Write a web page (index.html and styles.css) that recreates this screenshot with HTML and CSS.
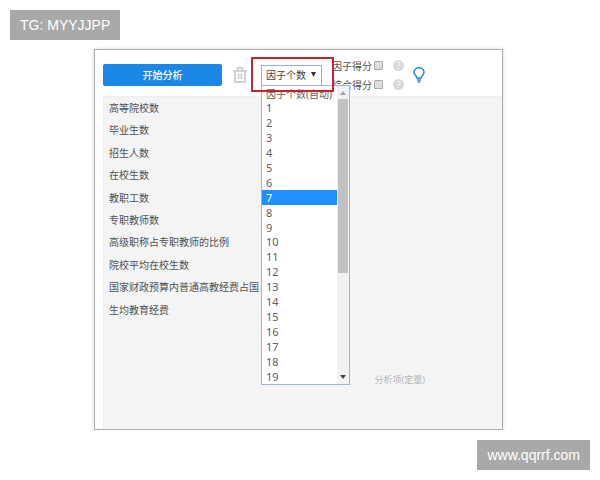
FILE: index.html
```html
<!DOCTYPE html>
<html lang="zh-CN">
<head>
<meta charset="utf-8">
<title>因子分析</title>
<link rel="stylesheet" href="styles.css">
</head>
<body>
<div class="badge badge-top">TG: MYYJJPP</div>
<main class="window">
  <header class="toolbar">
    <button class="start" type="button">开始分析</button>
    <button class="icon-button trash" type="button" aria-label="删除">
      <svg viewBox="0 0 14 16" width="14" height="16" fill="none" stroke="#d2d2d2" stroke-width="2"><path d="M0 4h14M4.500 3V1h5v2M2 4v11h10V4M5.500 7v5M8.500 7v5"/></svg>
    </button>
    <div class="picker">
      <select class="factor" aria-label="因子个数"><option>因子个数</option></select>
      <svg class="arrow" viewBox="0 0 5 5" width="5" height="5"><path d="M0 0h5L2.500 5z" fill="#333"/></svg>
      <div class="popup">
        <ul class="options" role="listbox" aria-label="因子个数">
          <li role="option">因子个数(自动)</li>
          <li role="option">1</li>
          <li role="option">2</li>
          <li role="option">3</li>
          <li role="option">4</li>
          <li role="option">5</li>
          <li role="option">6</li>
          <li role="option" class="active" aria-selected="true">7</li>
          <li role="option">8</li>
          <li role="option">9</li>
          <li role="option">10</li>
          <li role="option">11</li>
          <li role="option">12</li>
          <li role="option">13</li>
          <li role="option">14</li>
          <li role="option">15</li>
          <li role="option">16</li>
          <li role="option">17</li>
          <li role="option">18</li>
          <li role="option">19</li>
        </ul>
        <div class="scrollbar">
          <svg viewBox="0 0 6 4" width="6" height="4"><path d="M0 4h6L3 0z" fill="#a5a5a5"/></svg>
          <div class="track"><div class="thumb"></div></div>
          <svg viewBox="0 0 6 4" width="6" height="4"><path d="M0 0h6L3 4z" fill="#444"/></svg>
        </div>
      </div>
      <div class="highlight"></div>
    </div>
    <div class="checks">
      <div class="check"><label for="factor-score">因子得分</label><input id="factor-score" type="checkbox"><span class="help">?</span></div>
      <div class="check"><label for="total-score">综合得分</label><input id="total-score" type="checkbox"><span class="help">?</span></div>
    </div>
    <button class="icon-button" type="button" aria-label="提示">
      <svg viewBox="0 0 12 16" width="12" height="16" fill="none" stroke="#2589d2" stroke-width="1.5"><path d="M4 11C4 9 1 8.300 1 5.300a5 4.600 0 0 1 10 0C11 8.300 8 9 8 11zM4 13h4M4.800 15h2.400"/></svg>
    </button>
  </header>
  <section class="panel">
    <ul class="variables">
      <li>高等院校数</li>
      <li>毕业生数</li>
      <li>招生人数</li>
      <li>在校生数</li>
      <li>教职工数</li>
      <li>专职教师数</li>
      <li>高级职称占专职教师的比例</li>
      <li>院校平均在校生数</li>
      <li>国家财政预算内普通高教经费占国</li>
      <li>生均教育经费</li>
    </ul>
    <p class="drop-label">分析项(定量)</p>
  </section>
</main>
<div class="badge badge-bottom">www.qqrrf.com</div>
</body>
</html>
```
FILE: styles.css
```css
* { box-sizing: border-box; }
body {
  margin: 0;
  padding: 49px 97px 0 94px;
  background: #fff;
  color: #505050;
  font: 10px/14px "Noto Sans", "Noto Sans CJK SC", sans-serif;
}
ul, p { margin: 0; padding: 0; list-style: none; }
button, select, input { margin: 0; font: inherit; }

.badge {
  position: absolute;
  height: 30px;
  padding: 0 10px;
  background: #a9a9a9;
  color: #fff;
  font: 14px/30px "Liberation Sans", sans-serif;
}
.badge-top { left: 10px; top: 10px; }
.badge-bottom { right: 10px; bottom: 10px; }

.window {
  padding-left: 8px;
  border: 1px solid #adadad;
  box-shadow: 0 0 4px #d8d8d8;
}
.toolbar {
  display: flex;
  align-items: center;
  height: 46px;
  padding-top: 4px;
}
.start {
  width: 119px;
  height: 22px;
  padding: 0;
  border: 0;
  border-radius: 2px;
  background: #1b87e6;
  color: #fff;
  font-weight: 500;
}
.icon-button {
  display: flex;
  padding: 0;
  border: 0;
  background: none;
}
.trash { margin: 0 14px 0 11px; }

.picker { position: relative; }
.factor {
  display: block;
  width: 61px;
  height: 21px;
  padding: 0 4px;
  appearance: none;
  border: 1px solid #8caee6;
  border-radius: 0;
  outline: 0;
  background: #fff;
  color: #444;
}
.arrow { position: absolute; right: 6px; top: 7px; }
.popup {
  position: absolute;
  z-index: 1;
  left: 0;
  top: 20px;
  display: flex;
  width: 89px;
  height: 300px;
  border: 1px solid #a3b4cf;
  background: #fff;
}
.options {
  flex: 1;
  display: grid;
  grid-template-rows: repeat(20, minmax(0, 1fr));
  min-width: 0;
  color: #606060;
  font-size: 11px;
  line-height: 16px;
  white-space: nowrap;
}
.options li { padding-left: 4px; }
.options li:first-child { font-size: 10px; }
.options .active { background: #1e90ff; color: #fff; }
.scrollbar {
  display: flex;
  flex-direction: column;
  align-items: center;
  gap: 4px;
  width: 12px;
  padding: 5px 0;
  background: #f1f2f4;
}
.track { flex: 1; width: 10px; }
.thumb { height: 64%; background: #c1c1c1; }
.highlight {
  position: absolute;
  z-index: 2;
  left: -10px;
  top: -8px;
  width: 83px;
  height: 35px;
  border: 2px solid #c4262e;
}

.checks {
  display: grid;
  gap: 5px;
  margin: 0 9px 0 10px;
}
.check { display: flex; align-items: center; }
.check input {
  width: 9px;
  height: 9px;
  margin: 0 10px 0 2px;
  appearance: none;
  border: 1px solid #aaa;
  border-radius: 1px;
  background: #dedede;
}
.help {
  width: 11px;
  height: 11px;
  border-radius: 50%;
  background: #d9d9d9;
  color: #fff;
  font-size: 9px;
  line-height: 11px;
  text-align: center;
}

.panel {
  min-height: 333px;
  padding: 0 5px;
  border-left: 1px solid #eee;
  border-top: 1px solid #eee;
  background: #f4f4f4;
}
.variables {
  display: grid;
  grid-template-rows: repeat(10, 1fr);
  height: 224px;
  line-height: 22px;
}
.drop-label {
  margin: 52px 72px 0 0;
  color: #b5b5b5;
  font-size: 9px;
  text-align: right;
}
```
